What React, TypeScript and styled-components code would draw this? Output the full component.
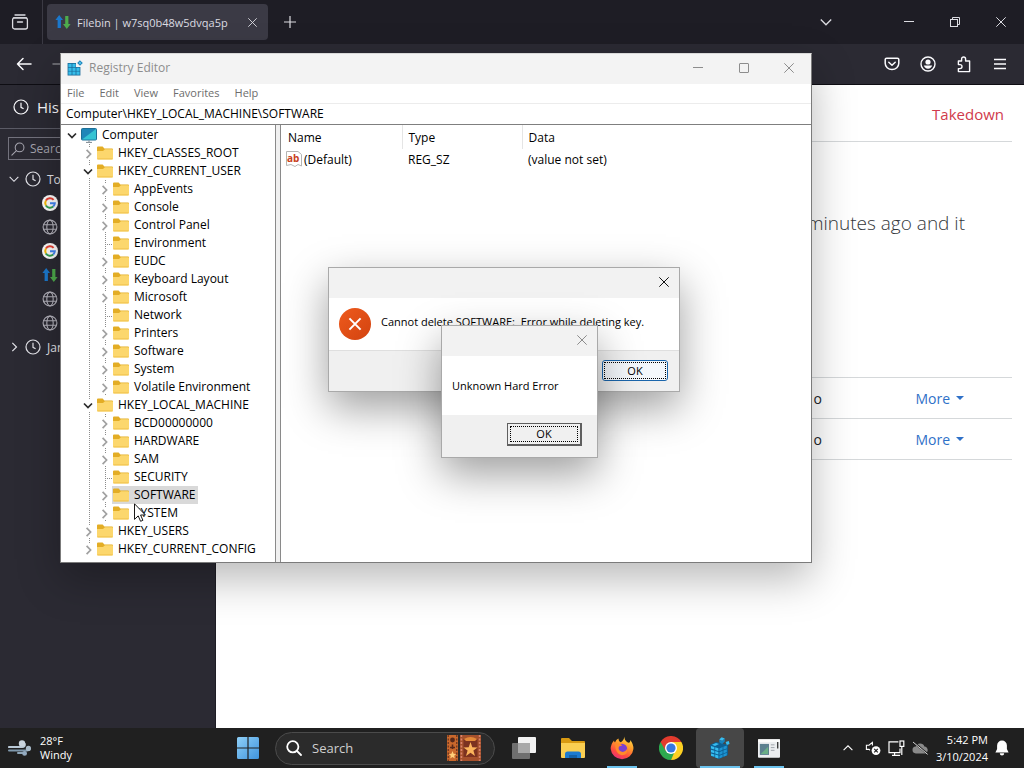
import React from "react";
import styled, { createGlobalStyle, css } from "styled-components";

const GlobalStyle = createGlobalStyle`
  * { box-sizing: border-box; }
  body { margin: 0; background: #2b2a33; }
  body, button, input { font-family: "Open Sans", "Noto Sans", sans-serif; }
  button { margin: 0; padding: 0; border: 0; background: none; color: inherit; font-size: inherit; }
  ul { list-style: none; margin: 0; padding: 0; }
  svg { display: block; flex: none; }
`;

/* ---------- desktop and browser ---------- */

const Desktop = styled.div`
  position: relative;
  min-height: 100vh;
  display: flex;
  flex-direction: column;
  overflow: hidden;
`;

const TabStrip = styled.header`
  display: flex;
  align-items: center;
  height: 44px;
  background: #1e1d25;
  color: #dcdce2;
`;

const IconButton = styled.button<{ $width?: number; $dim?: boolean }>`
  display: flex;
  align-items: center;
  justify-content: center;
  width: ${(p) => p.$width ?? 36}px;
  height: 36px;
  flex: none;
  opacity: ${(p) => (p.$dim ? 0.4 : 1)};
`;

const ViewCell = styled.div`
  display: flex;
  align-items: center;
  align-self: stretch;
  padding: 0 4px 0 2px;
  border-right: 1px solid #3b3a44;
`;

const Tab = styled.div`
  display: flex;
  align-items: center;
  gap: 6px;
  width: 221px;
  height: 36px;
  margin: 0 4px;
  padding: 0 2px 0 8px;
  border-radius: 4px;
  background: #3b3a45;
  font-size: 11px;
  white-space: nowrap;
`;

const TabTitle = styled.span`
  flex: 1;
`;

const Spacer = styled.div`
  flex: 1;
`;

const WindowControls = styled.div`
  display: flex;
  margin-left: 42px;
`;

const NavBar = styled.nav`
  display: flex;
  align-items: center;
  height: 41px;
  padding: 0 6px;
  background: #2b2a33;
  border-bottom: 1px solid #0e0d13;
  color: #fbfbfe;
`;

const BrowserBody = styled.div`
  flex: 1;
  display: flex;
`;

const Sidebar = styled.aside`
  width: 216px;
  flex: none;
  background: #2b2a33;
  color: #fbfbfe;
  border-right: 1px solid #1e1d25;
`;

const SidebarHead = styled.div`
  display: flex;
  align-items: center;
  gap: 8px;
  height: 44px;
  padding-left: 13px;
  border-bottom: 1px solid #5b5b66;
  font-size: 15px;
`;

const SidebarSearch = styled.label`
  display: flex;
  align-items: center;
  gap: 5px;
  height: 23px;
  margin: 8px 8px 7px;
  padding: 0 2px;
  border: 1px solid #73727d;
  color: #a5a4ae;
  input {
    flex: 1;
    min-width: 0;
    border: 0;
    padding: 0;
    background: none;
    font-size: 12px;
    color: #fbfbfe;
  }
  input::placeholder { color: #a5a4ae; opacity: 1; }
`;

const HistoryRow = styled.li<{ $child?: boolean }>`
  display: flex;
  align-items: center;
  gap: 6px;
  height: 24px;
  padding-left: ${(p) => (p.$child ? 42 : 9)}px;
  font-size: 12px;
  color: #e4e4ea;
`;

const Page = styled.main`
  flex: 1;
  min-width: 0;
  padding: 0 12px;
  background: #ffffff;
  color: #212529;
`;

const PageTop = styled.div`
  display: flex;
  justify-content: flex-end;
  align-items: center;
  height: 57px;
  padding: 2px 8px 0;
  border-bottom: 1px solid #d5d8da;
`;

const Takedown = styled.a`
  font-size: 15px;
  color: #d03a4c;
  text-decoration: none;
`;

const Lead = styled.p`
  margin: 65px 47px 138px;
  font-size: 19px;
  line-height: 32px;
  font-weight: 300;
  text-align: right;
  color: #33373b;
`;

const FileTable = styled.table`
  width: 100%;
  border-collapse: collapse;
  border-bottom: 1px solid #d5d8da;
  font-size: 14px;
  td { height: 41px; padding: 0; border-top: 1px solid #d5d8da; text-align: right; }
  td:last-child { width: 190px; padding-right: 48px; }
`;

const MoreButton = styled.button`
  display: inline-flex;
  align-items: center;
  gap: 6px;
  color: #2f71c8;
`;

/* ---------- windows ---------- */

const appWindow = css`
  position: absolute;
  display: flex;
  flex-direction: column;
  background: #ffffff;
  color: #000000;
`;

const RegistryWindow = styled.section`
  ${appWindow}
  left: 60px;
  top: 53px;
  width: 752px;
  height: 510px;
  border: 1px solid #7b7b7b;
  border-top-color: #d8d8d8;
  box-shadow: 0 16px 40px rgba(0, 0, 0, 0.28);
  font-size: 12px;
`;

const TitleBar = styled.div`
  display: flex;
  align-items: center;
  height: 30px;
  flex: none;
  padding: 0 0 3px 6px;
  background: #f3f3f3;
  color: #8d8d8d;
`;

const WindowTitle = styled.span`
  flex: 1;
  padding-left: 6px;
`;

const MenuBar = styled.div`
  display: flex;
  align-items: center;
  gap: 15px;
  height: 20px;
  flex: none;
  padding: 0 0 2px 6px;
  border-bottom: 1px solid #ececec;
  color: #6d6d6d;
  font-size: 11px;
`;

const AddressInput = styled.input`
  height: 20px;
  flex: none;
  border: 0;
  padding: 0 5px 1px;
  font-size: 12px;
  color: #000000;
  background: #ffffff;
`;

const Panes = styled.div`
  flex: 1;
  min-height: 0;
  display: flex;
  border-top: 1px solid #7f7f7f;
`;

const TreePane = styled.ul`
  width: 215px;
  flex: none;
  padding-top: 1px;
  border-right: 1px solid #8a8a8a;
`;

const Splitter = styled.div`
  width: 5px;
  flex: none;
  background: #f0f0f0;
  border-right: 1px solid #8a8a8a;
`;

const TreeRow = styled.li<{ $level: number }>`
  display: flex;
  height: 18px;
  padding-left: ${(p) => (p.$level === 0 ? 3 : 19)}px;
`;

type GuideKind = "none" | "line" | "half" | "leaf";

const dots = "repeating-linear-gradient(to bottom, #8c8c8c 0 1px, transparent 1px 2px)";
const dashes = "repeating-linear-gradient(to right, #8c8c8c 0 1px, transparent 1px 2px)";

const Guide = styled.span<{ $kind: GuideKind }>`
  display: flex;
  align-items: center;
  justify-content: center;
  width: 16px;
  flex: none;
  background-repeat: no-repeat;
  ${(p) => p.$kind === "line" && css`
    background-image: ${dots};
    background-position: 9px 0;
    background-size: 1px 100%;
  `}
  ${(p) => p.$kind === "half" && css`
    background-image: ${dots};
    background-position: 9px 0;
    background-size: 1px 50%;
  `}
  ${(p) => p.$kind === "leaf" && css`
    background-image: ${dots}, ${dashes};
    background-position: 9px 0, 9px 10px;
    background-size: 1px 100%, 7px 1px;
  `}
`;

const Expander = styled.button`
  background: #ffffff;
`;

const NodeLabel = styled.span<{ $selected?: boolean }>`
  display: flex;
  align-items: center;
  gap: 5px;
  padding: 0 3px 0 1px;
  line-height: 18px;
  white-space: nowrap;
  background: ${(p) => (p.$selected ? "#d9d9d9" : "transparent")};
`;

const ListPane = styled.div`
  flex: 1;
`;

const ValueTable = styled.table`
  width: 100%;
  table-layout: fixed;
  border-collapse: collapse;
  th { height: 24px; padding: 0 6px; font-weight: 400; text-align: left; border-right: 1px solid #e5e5e5; }
  th:last-child { border-right: 0; }
  td { height: 20px; padding: 0 6px; }
  th:first-child { padding-left: 7px; }
  td:first-child { padding-left: 5px; }
`;

const WithIcon = styled.span`
  display: flex;
  align-items: center;
  gap: 2px;
`;

const DialogFrame = styled.section<{ $x: number; $y: number; $w: number }>`
  ${appWindow}
  left: ${(p) => p.$x}px;
  top: ${(p) => p.$y}px;
  width: ${(p) => p.$w}px;
  border: 1px solid #a9a9a9;
  box-shadow: 0 16px 40px rgba(0, 0, 0, 0.38);
  font-size: 11px;
`;

const DialogTitle = styled.div<{ $inactive?: boolean }>`
  display: flex;
  justify-content: flex-end;
  height: 30px;
  padding-bottom: 2px;
  background: #f2f2f2;
  color: ${(p) => (p.$inactive ? "#8c8c8c" : "#111111")};
`;

const DialogClose = styled.button`
  display: flex;
  align-items: center;
  justify-content: center;
  width: 30px;
`;

const DialogMessage = styled.div<{ $height: number }>`
  display: flex;
  align-items: center;
  gap: 10px;
  height: ${(p) => p.$height}px;
  padding: 0 10px 0 10px;
  white-space: pre;
`;

const DialogText = styled.p<{ $raised?: boolean }>`
  margin: 0;
  padding: 0 0 ${(p) => (p.$raised ? 6 : 0)}px;
`;

const DialogFooter = styled.div`
  display: flex;
  align-items: center;
  justify-content: flex-end;
  background: #f0f0f0;
`;

const ModernFooter = styled(DialogFooter)`
  height: 41px;
  padding: 0 11px 2px 0;
  border-top: 1px solid #dfdfdf;
`;

const ClassicFooter = styled(DialogFooter)`
  height: 42px;
  padding: 0 15px 4px 0;
`;

const OkButton = styled.button`
  width: 66px;
  height: 21px;
  padding: 1px;
  border: 1px solid #1b66ac;
  border-radius: 3px;
  background: #f4f8fc;
`;

const ClassicOkButton = styled.button`
  width: 75px;
  height: 23px;
  padding: 2px;
  border: 1px solid #5f5f5f;
  border-right-width: 2px;
  border-bottom-width: 2px;
  background: #f0f0f0;
`;

const FocusRing = styled.span`
  display: flex;
  align-items: center;
  justify-content: center;
  height: 100%;
  border: 1px dotted #000000;
`;

const Pointer = styled.div`
  position: absolute;
  left: 134px;
  top: 503px;
`;

/* ---------- taskbar ---------- */

const Taskbar = styled.footer`
  display: flex;
  align-items: center;
  height: 40px;
  flex: none;
  background: #202020;
  color: #ffffff;
  font-size: 11px;
  line-height: 14px;
`;

const Weather = styled.button`
  display: flex;
  align-items: center;
  gap: 8px;
  width: 224px;
  flex: none;
  padding-left: 8px;
  text-align: left;
  line-height: 14px;
`;

const TaskItems = styled.div`
  display: flex;
  align-items: center;
  gap: 1px;
  height: 100%;
`;

const TaskButton = styled.button<{ $active?: boolean }>`
  display: flex;
  align-items: center;
  justify-content: center;
  position: relative;
  width: 48px;
  height: 40px;
  border-radius: 4px;
  background: ${(p) => (p.$active ? "#474747" : "transparent")};
`;

const RunningMark = styled.span<{ $wide?: boolean }>`
  position: absolute;
  bottom: 0;
  width: ${(p) => (p.$wide ? 40 : 30)}px;
  height: 2px;
  background: #6cc3ee;
`;

const SearchPill = styled.label`
  display: flex;
  align-items: center;
  gap: 10px;
  width: 220px;
  height: 33px;
  margin: 0 4px 0 2px;
  padding: 0 13px 0 10px;
  border: 1px solid #4b4b4b;
  border-radius: 17px;
  background: #2b2b2b;
  input {
    flex: 1;
    min-width: 0;
    border: 0;
    padding: 0;
    background: none;
    font-size: 13px;
    color: #ffffff;
  }
  input::placeholder { color: #cfcfcf; opacity: 1; }
`;

const Tray = styled.div`
  display: flex;
  align-items: center;
  gap: 7px;
  margin-left: auto;
  padding-right: 15px;
`;

const TrayMore = styled.button`
  padding-right: 4px;
`;

const Clock = styled.time`
  text-align: right;
  line-height: 17px;
  white-space: nowrap;
`;

/* ---------- drawings ---------- */

const Cross = ({ size = 10 }: { size?: number }) => (
  <svg width={size} height={size} viewBox="0 0 10 10" fill="none" stroke="currentColor" strokeWidth="1">
    <path d="M0.3 0.3 9.7 9.7M9.7 0.3 0.3 9.7" />
  </svg>
);

const Dash = () => (
  <svg width="10" height="10" viewBox="0 0 10 10" stroke="currentColor"><path d="M0 4.5H10" /></svg>
);

const Maximize = () => (
  <svg width="10" height="10" viewBox="0 0 10 10" fill="none" stroke="currentColor"><rect x="0.5" y="0.5" width="9" height="9" rx="0.5" /></svg>
);

const Restore = () => (
  <svg width="10" height="10" viewBox="0 0 10 10" fill="none" stroke="currentColor">
    <rect x="0.5" y="2.5" width="7" height="7" /><path d="M2.5 2.5V0.5H9.5V7.5H7.5" />
  </svg>
);

const ChevronDown = ({ size = 12 }: { size?: number }) => (
  <svg width={size} height={size} viewBox="0 0 12 12" fill="none" stroke="currentColor" strokeWidth="1.3">
    <path d="M0.8 3.5 6 8.8 11.2 3.5" />
  </svg>
);

const ClockIcon = () => (
  <svg width="16" height="16" viewBox="0 0 16 16" fill="none" stroke="currentColor" strokeWidth="1.2">
    <circle cx="8" cy="8" r="7" /><path d="M8 3.8V8.4L10.6 9.8" />
  </svg>
);

const Globe = () => (
  <svg width="16" height="16" viewBox="0 0 16 16" fill="none" stroke="#b4b3bc" strokeWidth="1.1">
    <circle cx="8" cy="8" r="6.9" /><ellipse cx="8" cy="8" rx="3.2" ry="6.9" /><path d="M1.6 5.8H14.4M1.6 10.2H14.4" />
  </svg>
);

const Google = () => (
  <svg width="16" height="16" viewBox="0 0 16 16">
    <circle cx="8" cy="8" r="8" fill="#fff" />
    <g fill="none" strokeWidth="2">
      <path d="M11.6 4.9A4.8 4.8 0 0 0 3.9 5.6" stroke="#e84335" />
      <path d="M3.9 5.6A4.8 4.8 0 0 0 3.9 10.4" stroke="#f9bb05" />
      <path d="M3.9 10.4A4.8 4.8 0 0 0 11.2 11.5" stroke="#34a353" />
      <path d="M8 8.2H12.8A4.8 4.8 0 0 1 11.2 11.5" stroke="#4285f4" />
    </g>
  </svg>
);

const Filebin = () => (
  <svg width="16" height="16" viewBox="0 0 16 16">
    <path d="M4.2 1 8 6H5.9V14H2.6V6H0.4Z" fill="#1b78cc" />
    <path d="M11.8 15 15.6 10H13.4V2H10.2V10H8Z" fill="#4eac4c" />
  </svg>
);

const Folder = () => (
  <svg width="16" height="14" viewBox="0 0 16 14">
    <path d="M0 1.5Q0 0.5 1 0.5H5.6L7.4 2.4H15Q16 2.4 16 3.4V6H0Z" fill="#e3ad25" />
    <path d="M0 5H6L8 3.2H15Q16 3.2 16 4.2V12.4Q16 13.4 15 13.4H1Q0 13.4 0 12.4Z" fill="#fcd76d" />
    <path d="M0.4 12.9H15.6" stroke="#f0c24c" />
  </svg>
);

const Computer = () => (
  <svg width="16" height="16" viewBox="0 0 16 16">
    <rect x="0.5" y="1.5" width="15" height="11.5" rx="1" fill="#1f86b8" stroke="#1d6f96" />
    <path d="M1 12.5 15 2V12.5Z" fill="#35c3d3" />
    <path d="M8 13.4V15M5 15.4H11" stroke="#7b8790" />
  </svg>
);

const TreeChevron = ({ open }: { open: boolean }) => (
  <svg width="12" height="12" viewBox="0 0 12 12" fill="none" stroke={open ? "#2b2b2b" : "#a0a0a0"} strokeWidth="1.7">
    <path d={open ? "M2 4.5 6 8.5 10 4.5" : "M4.6 2.8 8.6 7 4.6 11.2"} />
  </svg>
);

const RegistryIcon = () => (
  <svg width="16" height="16" viewBox="0 0 16 16">
    <path d="M0.6 3H9V7H13.4V15.4H0.6Z" fill="#1a6a98" />
    <g fill="#35bdea">
      <rect x="1.4" y="3.8" width="3.2" height="3.2" /><rect x="5.4" y="3.8" width="3.2" height="3.2" />
      <rect x="1.4" y="7.7" width="3.2" height="3.2" /><rect x="5.4" y="7.7" width="3.2" height="3.2" /><rect x="9.4" y="7.7" width="3.2" height="3.2" />
      <rect x="1.4" y="11.5" width="3.2" height="3.2" /><rect x="5.4" y="11.5" width="3.2" height="3.2" /><rect x="9.4" y="11.5" width="3.2" height="3.2" />
    </g>
    <path d="M12.9 0.2 15.8 3 13 5.8 10.2 3Z" fill="#1f86bd" /><path d="M12.9 1.8 14.2 3 13 4.3 11.8 3Z" fill="#5fd0f2" />
  </svg>
);

const RegistryTaskIcon = () => (
  <svg width="24" height="24" viewBox="0 0 24 24">
    <path d="M2 9 8 6 13 7 20 9V19L11 23 3 20Z" fill="#0d5f93" />
    <g fill="#36bdf0">
      <path d="M3 10 6.4 11V13.6L3 12.6ZM7.2 11.2 10.4 12.2V15L7.2 14ZM3 13.8 6.4 14.8V17.2L3 16.2ZM7.2 15 10.4 16V18.6L7.2 17.6ZM3 17.4 6.4 18.4V20.8L3 19.8ZM7.2 18.6 10.4 19.6V22.4L7.2 21.4Z" />
      <path d="M4 8.8 8 7 11 8 7 10Z" /><path d="M13.6 1.2 16.8 2.6 14.2 5 11.2 3.4Z" /><path d="M17.6 6 20.8 5 21.6 8 18.8 9Z" />
    </g>
    <path d="M11.2 3.4 14.2 5V8L11.4 6.6ZM14.2 5 16.8 2.6V5.6L14.2 8Z" fill="#1583bf" />
    <path d="M11.4 12.4 14.6 11V13.8L11.4 15.2ZM15.4 10.8 18.8 9.6V12.4L15.4 13.6ZM11.4 16.2 14.6 14.8V17.6L11.4 19ZM15.4 14.6 18.8 13.2V16L15.4 17.4ZM11.4 19.8 14.6 18.4V21L11.4 22.4ZM15.4 18.2 18.8 16.8V19.4L15.4 20.8Z" fill="#1d94d2" />
  </svg>
);

const StringValueIcon = () => (
  <svg width="16" height="16" viewBox="0 0 16 16">
    <path d="M0.5 0.5H12L15.5 3.5V15L12 13.5 9 15.5 5 13.5 0.5 14.5Z" fill="#fff" stroke="#b4b4b4" />
    <text x="1" y="11" fontSize="10" fontWeight="700" fontFamily="Open Sans, sans-serif" fill="#c8401c">ab</text>
  </svg>
);

const ErrorIcon = () => (
  <svg width="32" height="32" viewBox="0 0 32 32">
    <defs>
      <linearGradient id="errorFill" x1="0" y1="0" x2="1" y2="1">
        <stop offset="0" stopColor="#ee5a1c" /><stop offset="1" stopColor="#d24310" />
      </linearGradient>
    </defs>
    <circle cx="16" cy="16" r="16" fill="url(#errorFill)" />
    <path d="M10.4 10.4 21.6 21.6M21.6 10.4 10.4 21.6" stroke="#fff" strokeWidth="2" />
  </svg>
);

const FirefoxViewIcon = () => (
  <svg width="18" height="18" viewBox="0 0 18 18" fill="none" stroke="currentColor" strokeWidth="1.3" strokeLinecap="round">
    <path d="M4 2H14M2.4 4.8H15.6" /><rect x="1.6" y="4.8" width="14.8" height="11.2" rx="2" /><path d="M6.6 9H11.4" strokeWidth="1.6" />
  </svg>
);

const PlusIcon = () => (
  <svg width="12" height="12" viewBox="0 0 12 12" stroke="currentColor"><path d="M6 0V12M0 6H12" strokeWidth="1.2" /></svg>
);

const Arrow = ({ forward }: { forward?: boolean }) => (
  <svg width="16" height="16" viewBox="0 0 16 16" fill="none" stroke="currentColor" strokeWidth="1.5" strokeLinecap="round" strokeLinejoin="round">
    <path d={forward ? "M1 8H15M9 2.5 15 8 9 13.5" : "M15 8H1.5M7 2.5 1.5 8 7 13.5"} />
  </svg>
);

const Pocket = () => (
  <svg width="16" height="16" viewBox="0 0 16 16" fill="none" stroke="currentColor" strokeWidth="1.5" strokeLinecap="round" strokeLinejoin="round">
    <path d="M2.6 2.2H13.4Q14.8 2.2 14.8 3.6V7.2A6.8 6.4 0 0 1 1.2 7.2V3.6Q1.2 2.2 2.6 2.2Z" /><path d="M4.8 6.2 8 9.2 11.2 6.2" />
  </svg>
);

const Account = () => (
  <svg width="16" height="16" viewBox="0 0 16 16" fill="none" stroke="currentColor" strokeWidth="1.4">
    <circle cx="8" cy="8" r="7" /><circle cx="8" cy="6" r="2.6" fill="currentColor" stroke="none" />
    <path d="M3.8 9.6H12.2A4.4 4.4 0 0 1 3.8 9.6Z" fill="currentColor" stroke="none" />
  </svg>
);

const Extension = () => (
  <svg width="16" height="17" viewBox="0 0 16 17" fill="none" stroke="currentColor" strokeWidth="1.4" strokeLinejoin="round">
    <path d="M2.4 5H5.6V3A1.9 1.9 0 0 1 9.6 3V5H13.6V15.6H2.4V12.6H4A1.9 1.9 0 0 0 4 8.6H2.4Z" />
  </svg>
);

const Burger = () => (
  <svg width="14" height="14" viewBox="0 0 14 14" stroke="currentColor" strokeWidth="1.4"><path d="M1 2.5H13M1 7H13M1 11.5H13" /></svg>
);

const Lens = ({ size, flip }: { size: number; flip?: boolean }) => (
  <svg width={size} height={size} viewBox="0 0 16 16" fill="none" stroke="currentColor" strokeWidth={flip ? 1.2 : 1.8} strokeLinecap="round">
    {flip ? (
      <><circle cx="9.8" cy="6.2" r="5" /><path d="M6.2 9.8 1 15" /></>
    ) : (
      <><circle cx="6.8" cy="6.8" r="5.6" /><path d="M11 11 15 15" /></>
    )}
  </svg>
);

const Wind = () => (
  <svg width="24" height="20" viewBox="0 0 24 20" fill="none" strokeLinecap="round">
    <path d="M1 9H14Q17.4 8.6 16.6 5.8" stroke="#b9c9d6" strokeWidth="2.2" />
    <path d="M1 12.6H19Q22.6 11.8 21.4 9.4" stroke="#7f98ac" strokeWidth="2" />
    <path d="M10 15H14.6" stroke="#8fa6b8" strokeWidth="2" />
    <circle cx="14" cy="5.4" r="3.2" fill="#c9d4dd" /><circle cx="20.4" cy="10.4" r="2.6" fill="#a8bac8" /><circle cx="16.6" cy="15.4" r="2.4" fill="#94abc0" />
  </svg>
);

const WindowsLogo = () => (
  <svg width="22" height="22" viewBox="0 0 22 22">
    <defs>
      <linearGradient id="winFill" x1="0" y1="0" x2="1" y2="1">
        <stop offset="0" stopColor="#8fd0f8" /><stop offset="1" stopColor="#3f93dc" />
      </linearGradient>
    </defs>
    <path d="M1.5 0H10.4V10.4H0V1.5Q0 0 1.5 0ZM11.6 0H20.5Q22 0 22 1.5V10.4H11.6ZM0 11.6H10.4V22H1.5Q0 22 0 20.5ZM11.6 11.6H22V20.5Q22 22 20.5 22H11.6Z" fill="url(#winFill)" />
  </svg>
);

const FilmStrip = () => (
  <svg width="34" height="26" viewBox="0 0 34 26">
    <rect width="11" height="26" fill="#c9682c" /><rect x="13" width="21" height="26" fill="#a5502c" />
    <path d="M1.2 0V26M9.8 0V26" stroke="#53271c" strokeDasharray="2 1.5" />
    <path d="M14.4 0V26M32.6 0V26" stroke="#d9836b" strokeWidth="1.6" strokeDasharray="2 1.5" />
    <rect x="16.5" y="4" width="14" height="18" fill="#7c3220" />
    <path d="M17 4Q23.5 0 30 4L28 6H19Z" fill="#e38a3a" />
    <path d="M23.5 7 25.3 12.2 30.6 12.4 26.4 15.6 28 21 23.5 17.8 19 21 20.6 15.6 16.4 12.4 21.7 12.2Z" fill="#fbb45c" />
    <circle cx="5.5" cy="5" r="2.4" fill="#58291a" /><path d="M3 12.5H8M5.5 9.5V14" stroke="#58291a" strokeWidth="1.6" />
    <path d="M5.5 16 6.6 18.8 9.2 19 7.2 20.8 7.8 23.6 5.5 22 3.2 23.6 3.8 20.8 1.8 19 4.4 18.8Z" fill="#ffd07a" />
  </svg>
);

const TaskView = () => (
  <svg width="24" height="24" viewBox="0 0 24 24">
    <rect x="6" y="1" width="18" height="16" rx="1" fill="#f2f2f2" /><rect x="0" y="7" width="18" height="16" rx="1" fill="#6f6f6f" />
    <rect x="6" y="7" width="12" height="10" fill="#a8a8a8" />
  </svg>
);

const Explorer = () => (
  <svg width="24" height="24" viewBox="0 0 24 24">
    <path d="M0 3Q0 2 1 2H8L11 5H23Q24 5 24 6V9H0Z" fill="#d99a12" />
    <path d="M0 7H24V21Q24 22 23 22H1Q0 22 0 21Z" fill="#fbcf52" />
    <path d="M4 18Q4 15.5 6.5 15.5H17.5Q20 15.5 20 18V22H4Z" fill="#1d7bd0" /><path d="M8 19H16V22H8Z" fill="#1461a8" />
  </svg>
);

const Firefox = () => (
  <svg width="24" height="24" viewBox="0 0 24 24">
    <defs>
      <linearGradient id="foxFill" x1="0.8" y1="0" x2="0.3" y2="1">
        <stop offset="0" stopColor="#ffe14a" /><stop offset="0.4" stopColor="#ff9a2a" /><stop offset="0.75" stopColor="#ff4a40" /><stop offset="1" stopColor="#e8317a" />
      </linearGradient>
    </defs>
    <path d="M14.6 0.5Q14 3.5 17 6Q19 7.6 20 6Q20.4 4.8 20.2 4Q23.6 8 23.4 13A11.4 11.2 0 0 1 0.7 13Q0.6 8 4 4.4Q4.2 6 5 6.6Q6 3.4 8.4 2.4Q8.4 5 10.6 6.2Q13.4 5 14.6 0.5Z" fill="url(#foxFill)" />
    <circle cx="12" cy="13" r="5.2" fill="#7b3fd0" />
    <path d="M5 8Q9 6.4 12.4 9.2Q10.6 10 9 10.4Q7.6 13.6 11 15.6Q15 16.8 17 13Q18 19.4 11.6 19.2Q5.6 18.4 5 8Z" fill="#ff8a2c" />
  </svg>
);

const Chrome = () => (
  <svg width="24" height="24" viewBox="0 0 24 24">
    <path d="M12 12 1.6 6A12 12 0 0 0 12 24L17.2 15Z" fill="#2da94f" />
    <path d="M12 12H17.2L12 24A12 12 0 0 0 22.4 6H12Z" fill="#fdd023" />
    <path d="M12 6H22.4A12 12 0 0 0 1.6 6L6.8 15Z" fill="#e33b2e" />
    <circle cx="12" cy="12" r="6" fill="#fff" /><circle cx="12" cy="12" r="4.6" fill="#3778e0" />
  </svg>
);

const TaskApp = () => (
  <svg width="22" height="19" viewBox="0 0 24 20">
    <rect width="24" height="20" rx="1" fill="#eceef0" /><rect x="0" width="24" height="3" fill="#fbfbfb" />
    <rect x="2" y="5" width="10" height="12" fill="#5b7f8f" /><path d="M3 16 11 8V16Z" fill="#69ae86" />
    <path d="M14 6H18M14 9H18M14 12H18" stroke="#9aa0a6" /><path d="M21.5 3V10" stroke="#333" strokeWidth="1.4" />
  </svg>
);

const Speaker = () => (
  <svg width="16" height="16" viewBox="0 0 16 16" fill="none" stroke="currentColor" strokeWidth="1.1">
    <path d="M7.4 5.4V2.4L4 5.2H1.4V9.4H4L5 10.2" /><circle cx="11" cy="10.6" r="4.4" fill="#fff" stroke="none" />
    <path d="M9.2 8.8 12.8 12.4M12.8 8.8 9.2 12.4" stroke="#202020" strokeWidth="1.2" />
  </svg>
);

const Network = () => (
  <svg width="17" height="17" viewBox="0 0 17 17" fill="none" stroke="currentColor" strokeWidth="1.2">
    <path d="M10.4 1.8H1V12.6H12V8.4M4 15.4H12M6.6 12.6V15.4M13.8 6.6V15" /><rect x="12" y="1" width="3.8" height="5.4" />
  </svg>
);

const CloudOff = () => (
  <svg width="17" height="14" viewBox="0 0 17 14">
    <path d="M4 12.4A3.4 3.4 0 0 1 3.8 5.6 4.6 4.6 0 0 1 12.4 5.4 3.6 3.6 0 0 1 13.2 12.4Z" fill="#8a8a8a" />
    <path d="M1.4 1 15.6 13" stroke="#202020" strokeWidth="1.8" /><path d="M1 1 15.6 13.4" stroke="#d6d6d6" strokeWidth="1" />
  </svg>
);

const Bell = () => (
  <svg width="14" height="16" viewBox="0 0 14 16" fill="#fff">
    <path d="M7 0.6A4.9 4.9 0 0 1 11.9 5.5V9L13.6 12.4H0.4L2.1 9V5.5A4.9 4.9 0 0 1 7 0.6ZM4.8 13.2H9.2A2.2 2.2 0 0 1 4.8 13.2Z" />
  </svg>
);

/* ---------- data ---------- */

type Node = { name: string; level: number; state: "open" | "closed" | "leaf" };

const childNodes = (names: string[], leaves: string[]): Node[] =>
  names.map((name) => ({ name, level: 2, state: leaves.includes(name) ? "leaf" : "closed" }));

const nodes: Node[] = [
  { name: "Computer", level: 0, state: "open" },
  { name: "HKEY_CLASSES_ROOT", level: 1, state: "closed" },
  { name: "HKEY_CURRENT_USER", level: 1, state: "open" },
  ...childNodes(
    ["AppEvents", "Console", "Control Panel", "Environment", "EUDC", "Keyboard Layout", "Microsoft", "Network", "Printers", "Software", "System", "Volatile Environment"],
    ["Environment", "Network"],
  ),
  { name: "HKEY_LOCAL_MACHINE", level: 1, state: "open" },
  ...childNodes(["BCD00000000", "HARDWARE", "SAM", "SECURITY", "SOFTWARE", "SYSTEM"], ["SECURITY"]),
  { name: "HKEY_USERS", level: 1, state: "closed" },
  { name: "HKEY_CURRENT_CONFIG", level: 1, state: "closed" },
];

const guideFor = (node: Node, last: boolean): GuideKind => {
  if (node.level === 0) return "none";
  if (node.state === "leaf") return "leaf";
  return last ? "half" : "line";
};

const historyIcons = [Google, Globe, Google, Filebin, Globe, Globe];

/* ---------- views ---------- */

const Browser = () => (
  <>
    <TabStrip>
      <ViewCell><IconButton aria-label="View"><FirefoxViewIcon /></IconButton></ViewCell>
      <Tab>
        <Filebin />
        <TabTitle>Filebin | w7sq0b48w5dvqa5p</TabTitle>
        <IconButton $width={28} aria-label="Close tab"><Cross size={9} /></IconButton>
      </Tab>
      <IconButton aria-label="New tab"><PlusIcon /></IconButton>
      <Spacer />
      <IconButton aria-label="List tabs"><ChevronDown /></IconButton>
      <WindowControls>
        <IconButton $width={46} aria-label="Minimize"><Dash /></IconButton>
        <IconButton $width={46} aria-label="Restore"><Restore /></IconButton>
        <IconButton $width={46} aria-label="Close"><Cross /></IconButton>
      </WindowControls>
    </TabStrip>
    <NavBar>
      <IconButton aria-label="Back"><Arrow /></IconButton>
      <IconButton aria-label="Forward" $dim><Arrow forward /></IconButton>
      <Spacer />
      <IconButton aria-label="Pocket"><Pocket /></IconButton>
      <IconButton aria-label="Account"><Account /></IconButton>
      <IconButton aria-label="Extensions"><Extension /></IconButton>
      <IconButton aria-label="Menu"><Burger /></IconButton>
    </NavBar>
    <BrowserBody>
      <Sidebar>
        <SidebarHead><ClockIcon />His</SidebarHead>
        <SidebarSearch>
          <Lens size={14} flip />
          <input aria-label="Search history" placeholder="Search" />
        </SidebarSearch>
        <ul>
          <HistoryRow><ChevronDown size={10} /><ClockIcon />To</HistoryRow>
          {historyIcons.map((Icon, i) => (
            <HistoryRow key={i} $child><Icon /></HistoryRow>
          ))}
          <HistoryRow>
            <svg width="10" height="10" viewBox="0 0 12 12" fill="none" stroke="currentColor" strokeWidth="1.4"><path d="M4 1 9 6 4 11" /></svg>
            <ClockIcon />Jan
          </HistoryRow>
        </ul>
      </Sidebar>
      <Page>
        <PageTop><Takedown href="#takedown">Takedown</Takedown></PageTop>
        <Lead>minutes ago and it</Lead>
        <FileTable>
          <tbody>
            {[0, 1].map((row) => (
              <tr key={row}>
                <td>o</td>
                <td>
                  <MoreButton>More
                    <svg width="8" height="4" viewBox="0 0 8 4"><path d="M0 0H8L4 4Z" fill="currentColor" /></svg>
                  </MoreButton>
                </td>
              </tr>
            ))}
          </tbody>
        </FileTable>
      </Page>
    </BrowserBody>
  </>
);

const RegistryEditor = () => (
  <RegistryWindow aria-label="Registry Editor">
    <TitleBar>
      <RegistryIcon />
      <WindowTitle>Registry Editor</WindowTitle>
      <IconButton $width={46} aria-label="Minimize"><Dash /></IconButton>
      <IconButton $width={46} aria-label="Maximize"><Maximize /></IconButton>
      <IconButton $width={44} aria-label="Close"><Cross /></IconButton>
    </TitleBar>
    <MenuBar>
      {["File", "Edit", "View", "Favorites", "Help"].map((m) => <button key={m}>{m}</button>)}
    </MenuBar>
    <AddressInput aria-label="Address" defaultValue={"Computer\\HKEY_LOCAL_MACHINE\\SOFTWARE"} />
    <Panes>
      <TreePane>
        {nodes.map((node, i) => (
          <TreeRow key={node.name} $level={node.level}>
            {node.level === 2 && <Guide $kind="line" />}
            <Guide $kind={guideFor(node, i === nodes.length - 1)}>
              {node.state !== "leaf" && (
                <Expander aria-label={`Toggle ${node.name}`}><TreeChevron open={node.state === "open"} /></Expander>
              )}
            </Guide>
            <NodeLabel $selected={node.name === "SOFTWARE"}>
              {node.level === 0 ? <Computer /> : <Folder />}
              {node.name}
            </NodeLabel>
          </TreeRow>
        ))}
      </TreePane>
      <Splitter />
      <ListPane>
        <ValueTable>
          <colgroup><col width="121" /><col width="120" /><col /></colgroup>
          <thead><tr><th>Name</th><th>Type</th><th>Data</th></tr></thead>
          <tbody>
            <tr>
              <td><WithIcon><StringValueIcon />(Default)</WithIcon></td>
              <td>REG_SZ</td>
              <td>(value not set)</td>
            </tr>
          </tbody>
        </ValueTable>
      </ListPane>
    </Panes>
  </RegistryWindow>
);

const TaskbarView = () => (
  <Taskbar>
    <Weather><Wind /><span>28°F<br />Windy</span></Weather>
    <TaskItems>
      <TaskButton aria-label="Start"><WindowsLogo /></TaskButton>
      <SearchPill>
        <Lens size={16} />
        <input aria-label="Search" placeholder="Search" />
        <FilmStrip />
      </SearchPill>
      <TaskButton aria-label="Task view"><TaskView /></TaskButton>
      <TaskButton aria-label="File Explorer"><Explorer /></TaskButton>
      <TaskButton aria-label="Firefox"><Firefox /><RunningMark /></TaskButton>
      <TaskButton aria-label="Chrome"><Chrome /></TaskButton>
      <TaskButton aria-label="Registry Editor" $active><RegistryTaskIcon /><RunningMark $wide /></TaskButton>
      <TaskButton aria-label="Application"><TaskApp /><RunningMark /></TaskButton>
    </TaskItems>
    <Tray>
      <TrayMore aria-label="Show hidden icons">
        <svg width="12" height="12" viewBox="0 0 12 12" fill="none" stroke="currentColor" strokeWidth="1.1"><path d="M1.6 8.2 6 3.8 10.4 8.2" /></svg>
      </TrayMore>
      <Speaker />
      <Network />
      <CloudOff />
      <Clock>5:42 PM<br />3/10/2024</Clock>
      <Bell />
    </Tray>
  </Taskbar>
);

export default function App() {
  return (
    <Desktop>
      <GlobalStyle />
      <Browser />
      <TaskbarView />
      <RegistryEditor />
      <DialogFrame $x={328} $y={267} $w={352} role="dialog" aria-label="Delete error">
        <DialogTitle><DialogClose aria-label="Close"><Cross /></DialogClose></DialogTitle>
        <DialogMessage $height={52}>
          <ErrorIcon />
          <DialogText $raised>{"Cannot delete SOFTWARE:  Error while deleting key."}</DialogText>
        </DialogMessage>
        <ModernFooter><OkButton><FocusRing>OK</FocusRing></OkButton></ModernFooter>
      </DialogFrame>
      <DialogFrame $x={441} $y={325} $w={157} role="dialog" aria-label="Hard error">
        <DialogTitle $inactive><DialogClose aria-label="Close"><Cross /></DialogClose></DialogTitle>
        <DialogMessage $height={59}><DialogText>Unknown Hard Error</DialogText></DialogMessage>
        <ClassicFooter><ClassicOkButton><FocusRing>OK</FocusRing></ClassicOkButton></ClassicFooter>
      </DialogFrame>
      <Pointer>
        <svg width="12" height="19" viewBox="0 0 12 19">
          <path d="M0.5 0.8V16.4L4.2 12.9 6.6 18.3 8.9 17.3 6.6 12H11.4Z" fill="#fff" stroke="#000" strokeWidth="0.9" />
        </svg>
      </Pointer>
    </Desktop>
  );
}
